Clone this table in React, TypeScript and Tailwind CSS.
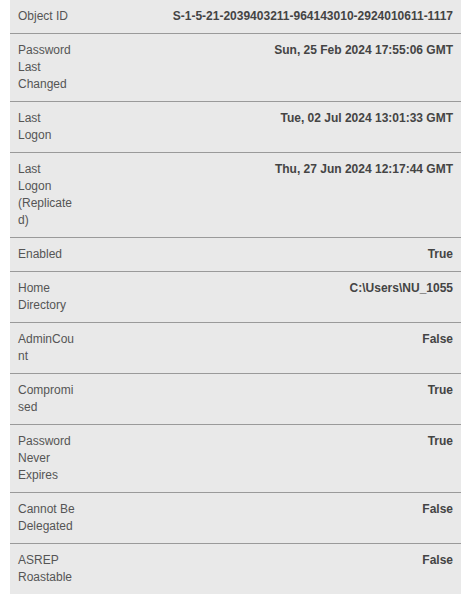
const rows: { label: string; value: string }[] = [
  { label: "Object ID", value: "S-1-5-21-2039403211-964143010-2924010611-1117" },
  { label: "Password Last Changed", value: "Sun, 25 Feb 2024 17:55:06 GMT" },
  { label: "Last Logon", value: "Tue, 02 Jul 2024 13:01:33 GMT" },
  { label: "Last Logon (Replicated)", value: "Thu, 27 Jun 2024 12:17:44 GMT" },
  { label: "Enabled", value: "True" },
  { label: "Home Directory", value: "C:\\Users\\NU_1055" },
  { label: "AdminCount", value: "False" },
  { label: "Compromised", value: "True" },
  { label: "Password Never Expires", value: "True" },
  { label: "Cannot Be Delegated", value: "False" },
  { label: "ASREP Roastable", value: "False" },
];

export default function App() {
  return (
    <div className="min-h-[599px] bg-white px-[10px] font-['Liberation_Sans',Arial,sans-serif] text-[12px] leading-[17px]">
      <table className="w-full border-collapse bg-[#e9e9e9]">
        <tbody>
          {rows.map((row, i) => (
            <tr
              key={row.label}
              className={i < rows.length - 1 ? "border-b border-[#9a9a9a]" : ""}
            >
              <td className="w-[73px] max-w-[73px] px-2 py-2 align-top wrap-anywhere text-[#555]">
                {row.label}
              </td>
              <td className="px-2 py-2 text-right align-top font-bold text-[#444]">
                {row.value}
              </td>
            </tr>
          ))}
        </tbody>
      </table>
    </div>
  );
}
